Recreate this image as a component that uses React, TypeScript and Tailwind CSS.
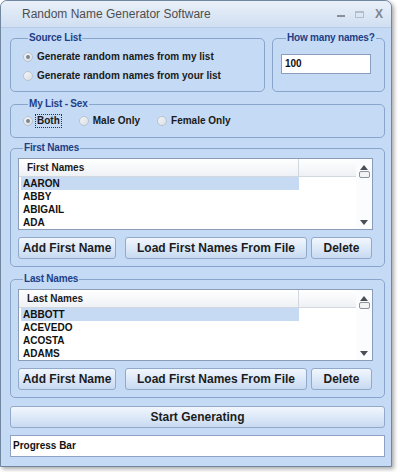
import React from "react";

const font = "font-['Liberation_Sans',Arial,sans-serif]";

function Radio({ label, checked, focus }: { label: string; checked?: boolean; focus?: boolean }) {
  return (
    <div className="flex items-center h-[19px]">
      <span className="w-[10px] h-[10px] rounded-full border border-[#b9c3cf] bg-gradient-to-br from-[#f4f6f8] to-[#d9dee4] flex items-center justify-center">
        {checked && <span className="w-[4px] h-[4px] rounded-full bg-[#7d8792]" />}
      </span>
      <span
        className={`ml-[3px] text-[10px] font-bold text-[#1a1a1a] leading-[12px] px-[1px] whitespace-nowrap ${
          focus ? "outline outline-1 outline-dotted outline-[#333]" : ""
        }`}
      >
        {label}
      </span>
    </div>
  );
}

function Group({ title, className, children }: { title: string; className?: string; children: React.ReactNode }) {
  return (
    <fieldset className={`border border-[#8aa5cc] rounded-[5px] ${className ?? ""}`}>
      <legend className="ml-[5px] px-[1px] text-[10px] leading-[12px] font-bold text-[#1e3f86] tracking-[-0.2px]">
        {title}
      </legend>
      {children}
    </fieldset>
  );
}

function Btn({ children, className }: { children: React.ReactNode; className?: string }) {
  return (
    <button
      className={`h-[22px] rounded-[3px] border border-[#93a9c9] bg-gradient-to-b from-[#f1f6fd] via-[#dde9f8] to-[#c8daf1] text-[12px] font-bold text-[#1c1c1c] whitespace-nowrap ${className ?? ""}`}
    >
      {children}
    </button>
  );
}

function NameList({ header, names }: { header: string; names: string[] }) {
  return (
    <div className="flex h-[72px] border border-[#8b9db6] bg-white">
      <div className="flex-1 overflow-hidden">
        <div className="flex h-[18px] bg-gradient-to-b from-[#ffffff] to-[#eef1f5] border-b border-[#d2d8e0]">
          <div className="w-[280px] pl-[8px] text-[10px] font-bold leading-[17px] text-[#1a1a1a] border-r border-[#d2d8e0]">
            {header}
          </div>
        </div>
        <div className="pl-[2px]">
          {names.map((n, i) => (
            <div
              key={n}
              className={`w-[278px] h-[13px] pl-[2px] text-[10px] font-bold leading-[13px] text-[#111] ${
                i === 0 ? "bg-[#c6daf3]" : ""
              }`}
            >
              {n}
            </div>
          ))}
        </div>
      </div>
      <div className="w-[16px] bg-[#fbfcfd] flex flex-col items-center pt-[6px] pb-[4px]">
        <svg width="8" height="5" viewBox="0 0 8 5">
          <path d="M0 5 L4 0 L8 5 Z" fill="#4a4f56" />
        </svg>
        <div className="mt-[1px] w-[11px] h-[7px] rounded-[2px] border border-[#8c939c] bg-[#f2f3f5]" />
        <div className="flex-1" />
        <svg width="8" height="5" viewBox="0 0 8 5">
          <path d="M0 0 L8 0 L4 5 Z" fill="#4a4f56" />
        </svg>
      </div>
    </div>
  );
}

function NamesGroup({ title, header, names, className }: { title: string; header: string; names: string[]; className?: string }) {
  return (
    <Group title={title} className={`pl-[7px] pr-[11px] pt-[4px] pb-[7px] ${className ?? ""}`}>
      <NameList header={header} names={names} />
      <div className="flex mt-[7px]">
        <Btn className="w-[98px]">Add First Name</Btn>
        <Btn className="w-[182px] ml-[9px]">Load First Names From File</Btn>
        <Btn className="w-[61px] ml-[4px]">Delete</Btn>
      </div>
    </Group>
  );
}

export default function App() {
  return (
    <div className={`w-[400px] h-[472px] bg-white ${font}`}>
      <div className="w-[392px] h-[467px] rounded-t-[7px] border border-[#71869f] bg-[#c5daf4] shadow-[2px_2px_4px_rgba(0,0,0,0.35)] flex flex-col overflow-hidden">
        <div className="h-[27px] shrink-0 flex items-center bg-gradient-to-b from-[#e9f0f9] to-[#d0dff2] border-b border-[#b8cbe3]">
          <span className="ml-[21px] text-[12px] text-[#4e4e4e]">Random Name Generator Software</span>
          <div className="flex-1" />
          <span className="w-[8px] h-[2px] bg-[#8a8f96] mt-[3px]" />
          <span className="ml-[10px] w-[9px] h-[7px] border border-[#b4bcc6] border-t-2" />
          <span className="ml-[11px] mr-[8px] text-[12px] font-bold text-[#7d848d] leading-none">X</span>
        </div>

        <div className="pl-[9px] pr-[6px] flex flex-col">
          <div className="flex mt-[4px]">
            <Group title="Source List" className="w-[255px] h-[60px] pl-[12px] pt-[3px]">
              <Radio label="Generate random names from my list" checked />
              <Radio label="Generate random names from your list" />
            </Group>
            <Group title="How many names?" className="w-[113px] h-[60px] ml-[7px] pl-[8px]">
              <div className="mt-[10px] w-[90px] h-[20px] bg-white border border-[#8a9fbd] pl-[3px] text-[10px] font-bold leading-[18px] text-[#111]">
                100
              </div>
            </Group>
          </div>

          <Group title="My List - Sex" className="mt-[6px] h-[40px] pl-[12px] pt-[1px]">
            <div className="flex">
              <Radio label="Both" checked focus />
              <div className="ml-[18px]">
                <Radio label="Male Only" />
              </div>
              <div className="ml-[16px]">
                <Radio label="Female Only" />
              </div>
            </div>
          </Group>

          <NamesGroup
            title="First Names"
            header="First Names"
            names={["AARON", "ABBY", "ABIGAIL", "ADA"]}
            className="mt-[4px]"
          />
          <NamesGroup
            title="Last Names"
            header="Last Names"
            names={["ABBOTT", "ACEVEDO", "ACOSTA", "ADAMS"]}
            className="mt-[6px]"
          />

          <Btn className="mt-[8px] w-full">Start Generating</Btn>
          <div className="mt-[7px] h-[22px] bg-white border border-[#8da2c2] pl-[2px] text-[10px] font-bold leading-[20px] text-[#111]">
            Progress Bar
          </div>
        </div>
      </div>
    </div>
  );
}
